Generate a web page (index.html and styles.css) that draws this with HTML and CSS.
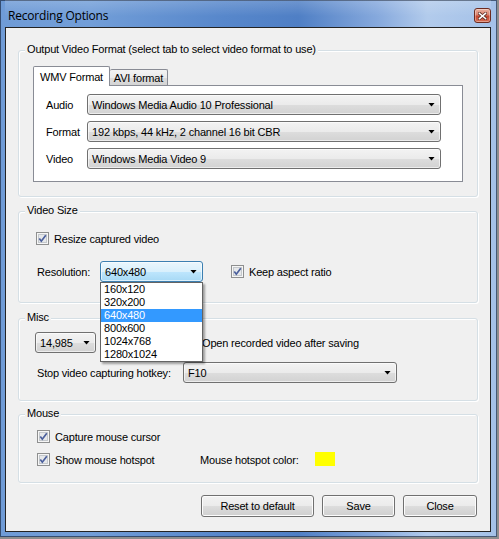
FILE: index.html
```html
<!DOCTYPE html>
<html lang="en">
<head>
    <meta charset="UTF-8">
    <title>Recording Options</title>
    <link rel="stylesheet" href="styles.css">
</head>
<body>
    <div class="window">
        <div class="titlebar">
            <span class="title">Recording Options</span>
            <button class="close-btn" type="button">
                <svg width="9" height="8" viewBox="0 0 9 8">
                    <path d="M1.5 1.5l6 5M7.5 1.5l-6 5" stroke="#5a2a22" stroke-width="3" stroke-linecap="square"/>
                    <path d="M1.5 1.5l6 5M7.5 1.5l-6 5" stroke="#fff" stroke-width="1.6" stroke-linecap="square"/>
                </svg>
            </button>
        </div>

        <div class="client">
            <div class="group group-format">
                <div class="group-title">Output Video Format (select tab to select video format to use)</div>
                <div class="tabs">
                    <div class="tab-strip">
                        <span class="tab tab-active">WMV Format</span>
                        <span class="tab tab-avi">AVI format</span>
                    </div>
                    <div class="tab-page">
                        <div class="field-row">
                            <span class="field-label">Audio</span>
                            <div class="combo combo-wide">Windows Media Audio 10 Professional</div>
                        </div>
                        <div class="field-row">
                            <span class="field-label">Format</span>
                            <div class="combo combo-wide">192 kbps, 44 kHz, 2 channel 16 bit CBR</div>
                        </div>
                        <div class="field-row">
                            <span class="field-label">Video</span>
                            <div class="combo combo-wide">Windows Media Video 9</div>
                        </div>
                    </div>
                </div>
            </div>

            <div class="group group-size">
                <div class="group-title">Video Size</div>
                <label class="check check-resize">
                    <svg class="box" width="13" height="13" viewBox="0 0 13 13">
                        <rect x="0.5" y="0.5" width="12" height="12" fill="#f6f6f6" stroke="#8e8f8f"/>
                        <rect x="2.5" y="2.5" width="8" height="8" fill="#e6e8ea" stroke="#c4c8cc"/>
                        <path d="M3.3 6.6l2 2.6L9.8 3.2" fill="none" stroke="#4b5f9c" stroke-width="1.7"/>
                    </svg>
                    <span>Resize captured video</span>
                </label>
                <div class="res-row">
                    <span class="res-label">Resolution:</span>
                    <div class="combo-wrap">
                        <div class="combo combo-focus combo-res">640x480</div>
                        <ul class="dropdown">
                            <li>160x120</li>
                            <li>320x200</li>
                            <li class="selected">640x480</li>
                            <li>800x600</li>
                            <li>1024x768</li>
                            <li>1280x1024</li>
                        </ul>
                    </div>
                    <label class="check check-aspect">
                        <svg class="box" width="13" height="13" viewBox="0 0 13 13">
                            <rect x="0.5" y="0.5" width="12" height="12" fill="#f6f6f6" stroke="#8e8f8f"/>
                            <rect x="2.5" y="2.5" width="8" height="8" fill="#e6e8ea" stroke="#c4c8cc"/>
                            <path d="M3.3 6.6l2 2.6L9.8 3.2" fill="none" stroke="#4b5f9c" stroke-width="1.7"/>
                        </svg>
                        <span>Keep aspect ratio</span>
                    </label>
                </div>
            </div>

            <div class="group group-misc">
                <div class="group-title">Misc</div>
                <div class="misc-row">
                    <div class="combo combo-fps">14,985</div>
                    <label class="check check-open">
                        <svg class="box" width="13" height="13" viewBox="0 0 13 13">
                            <rect x="0.5" y="0.5" width="12" height="12" fill="#f6f6f6" stroke="#8e8f8f"/>
                            <rect x="2.5" y="2.5" width="8" height="8" fill="#e6e8ea" stroke="#c4c8cc"/>
                        </svg>
                        <span>Open recorded video after saving</span>
                    </label>
                </div>
                <div class="hotkey-row">
                    <span class="hotkey-label">Stop video capturing hotkey:</span>
                    <div class="combo combo-hotkey">F10</div>
                </div>
            </div>

            <div class="group group-mouse">
                <div class="group-title">Mouse</div>
                <label class="check check-cursor">
                    <svg class="box" width="13" height="13" viewBox="0 0 13 13">
                        <rect x="0.5" y="0.5" width="12" height="12" fill="#f6f6f6" stroke="#8e8f8f"/>
                        <rect x="2.5" y="2.5" width="8" height="8" fill="#e6e8ea" stroke="#c4c8cc"/>
                        <path d="M3.3 6.6l2 2.6L9.8 3.2" fill="none" stroke="#4b5f9c" stroke-width="1.7"/>
                    </svg>
                    <span>Capture mouse cursor</span>
                </label>
                <div class="hotspot-row">
                    <label class="check check-hotspot">
                        <svg class="box" width="13" height="13" viewBox="0 0 13 13">
                            <rect x="0.5" y="0.5" width="12" height="12" fill="#f6f6f6" stroke="#8e8f8f"/>
                            <rect x="2.5" y="2.5" width="8" height="8" fill="#e6e8ea" stroke="#c4c8cc"/>
                            <path d="M3.3 6.6l2 2.6L9.8 3.2" fill="none" stroke="#4b5f9c" stroke-width="1.7"/>
                        </svg>
                        <span>Show mouse hotspot</span>
                    </label>
                    <span class="hotspot-label">Mouse hotspot color:</span>
                    <span class="swatch"></span>
                </div>
            </div>

            <div class="buttons">
                <button class="btn btn-reset" type="button">Reset to default</button>
                <button class="btn btn-save" type="button">Save</button>
                <button class="btn btn-close" type="button">Close</button>
            </div>
        </div>
    </div>
</body>
</html>
```

FILE: styles.css
```css
body {
    margin: 0;
    background: #8e8e8e;
    font-family: "Liberation Sans", Arial, sans-serif;
    font-size: 11px;
    letter-spacing: -0.18px;
    color: #000;
}

.window {
    width: 497px;
    height: 537px;
    box-sizing: border-box;
    padding: 0 6px 5px 5px;
    display: flex;
    flex-direction: column;
    background: linear-gradient(to right, #6f9bd6 0%, #729ed8 18%, #5787cb 45%, #4f7fc5 60%, #86a9dd 76%, #b2cbec 86%, #a4c1e8 100%);
    box-shadow: inset 0 0 0 1px rgba(28, 44, 70, 0.7);
}

/* title bar */
.titlebar {
    height: 27px;
    flex: none;
    display: flex;
    align-items: flex-start;
    justify-content: space-between;
    padding-left: 3px;
    background: linear-gradient(rgba(255, 255, 255, 0.18), rgba(255, 255, 255, 0) 60%);
}

.title {
    margin-top: 7px;
    font-family: "Open Sans", "Liberation Sans", sans-serif;
    font-size: 12px;
    line-height: 17px;
    color: #000;
    letter-spacing: -0.2px;
}

.close-btn {
    width: 17px;
    height: 15px;
    margin-top: 8px;
    padding: 0;
    border: 1px solid #6d2b20;
    border-radius: 3px;
    background: linear-gradient(#eab2a2 0%, #d9806b 45%, #c54630 55%, #d66f55 100%);
    box-shadow: inset 0 0 0 1px rgba(255, 255, 255, 0.35);
    display: flex;
    align-items: center;
    justify-content: center;
}

/* client area */
.client {
    flex: 1;
    border: 1px solid #232323;
    background: #f0f0f0;
    padding: 0 12px;
}

.group {
    box-sizing: border-box;
    border: 1px solid #d5dfe5;
    border-radius: 3px;
    box-shadow: inset 1px 1px 0 #fff, 1px 1px 0 #fff;
}

.group-title {
    width: fit-content;
    margin: -8px 0 0 6px;
    padding: 0 2px;
    line-height: 13px;
    background: #f0f0f0;
}

.group-format { margin-top: 22px; height: 147px; }
.group-size   { margin-top: 14px; height: 92px; }
.group-misc   { margin-top: 15px; height: 83px; }
.group-mouse  { margin-top: 13px; height: 69px; }

/* tab control */
.tabs {
    margin: 10px 14px 0;
}

.tab-strip {
    height: 19px;
    display: flex;
    align-items: flex-end;
}

.tab {
    box-sizing: border-box;
    border: 1px solid #898c95;
    border-bottom: none;
    border-radius: 2px 2px 0 0;
    text-align: center;
}

.tab-active {
    position: relative;
    z-index: 1;
    width: 77px;
    height: 20px;
    margin-bottom: -1px;
    line-height: 20px;
    background: #fff;
}

.tab-avi {
    width: 58px;
    height: 16px;
    line-height: 17px;
    border-left: none;
    background: linear-gradient(#f3f3f3, #ebebeb 50%, #dedede 50%, #d4d4d4);
}

.tab-page {
    height: 97px;
    box-sizing: border-box;
    border: 1px solid #898c95;
    background: #fff;
    padding: 8px 0 0 12px;
    display: flex;
    flex-direction: column;
    gap: 6px;
}

.field-row {
    display: flex;
    align-items: center;
}

.field-label {
    width: 41px;
}

/* combo boxes */
.combo {
    box-sizing: border-box;
    height: 21px;
    border: 1px solid #707070;
    border-radius: 3px;
    padding: 0 5px 0 4px;
    display: flex;
    align-items: center;
    justify-content: space-between;
    background: linear-gradient(#f3f3f3 0%, #ebebeb 50%, #dddddd 51%, #d2d2d2 100%);
    box-shadow: inset 0 0 0 1px rgba(255, 255, 255, 0.6);
}

.combo::after {
    content: "";
    width: 7px;
    height: 4px;
    background: #000;
    clip-path: polygon(0 0, 100% 0, 50% 100%);
}

.combo-wide   { width: 354px; }
.combo-res    { width: 103px; }
.combo-fps    { width: 61px; }
.combo-hotkey { width: 214px; }

.combo-focus {
    border-color: #3c7fb1;
    background: linear-gradient(#eaf6fd 0%, #d9f0fc 50%, #bee6fd 51%, #a7d9f5 100%);
}

.combo-wrap {
    position: relative;
}

.dropdown {
    position: absolute;
    top: 100%;
    left: 0;
    z-index: 2;
    width: 103px;
    box-sizing: border-box;
    margin: 0;
    padding: 0;
    list-style: none;
    border: 1px solid #646464;
    background: #fff;
    box-shadow: 2px 2px 2px rgba(0, 0, 0, 0.35);
}

.dropdown li {
    height: 13px;
    line-height: 13px;
    padding-left: 3px;
}

.dropdown .selected {
    background: #3399ff;
    color: #fff;
}

/* checkboxes */
.check {
    display: flex;
    align-items: center;
    gap: 5px;
    height: 13px;
}

.box {
    flex: none;
    display: block;
}

.check-resize {
    margin: 15px 0 0 17px;
}

.res-row {
    margin: 16px 0 0 18px;
    display: flex;
    align-items: center;
}

.res-label {
    width: 63px;
}

.check-aspect {
    margin-left: 28px;
}

.misc-row {
    margin: 8px 0 0 16px;
    display: flex;
    align-items: center;
}

.check-open {
    margin-left: 88px;
}

.hotkey-row {
    margin: 9px 0 0 18px;
    display: flex;
    align-items: center;
}

.hotkey-label {
    width: 146px;
}

.check-cursor {
    margin: 10px 0 0 18px;
}

.hotspot-row {
    margin: 10px 0 0 18px;
    display: flex;
    align-items: center;
    height: 13px;
}

.check-hotspot {
    width: 163px;
}

.hotspot-label {
    width: 115px;
}

.swatch {
    width: 20px;
    height: 14px;
    margin-top: -1px;
    background: #ffff00;
}

/* bottom buttons */
.buttons {
    margin: 12px 1px 0 0;
    display: flex;
    justify-content: flex-end;
    gap: 8px;
}

.btn {
    height: 22px;
    padding: 0;
    border: 1px solid #707070;
    border-radius: 3px;
    font-family: inherit;
    font-size: 11px;
    letter-spacing: inherit;
    color: #000;
    background: linear-gradient(#f2f2f2 0%, #ebebeb 50%, #dddddd 51%, #cfcfcf 100%);
    box-shadow: inset 0 0 0 1px #fcfcfc;
}

.btn-reset { width: 113px; }
.btn-save  { width: 73px; }
.btn-close { width: 74px; }
```
